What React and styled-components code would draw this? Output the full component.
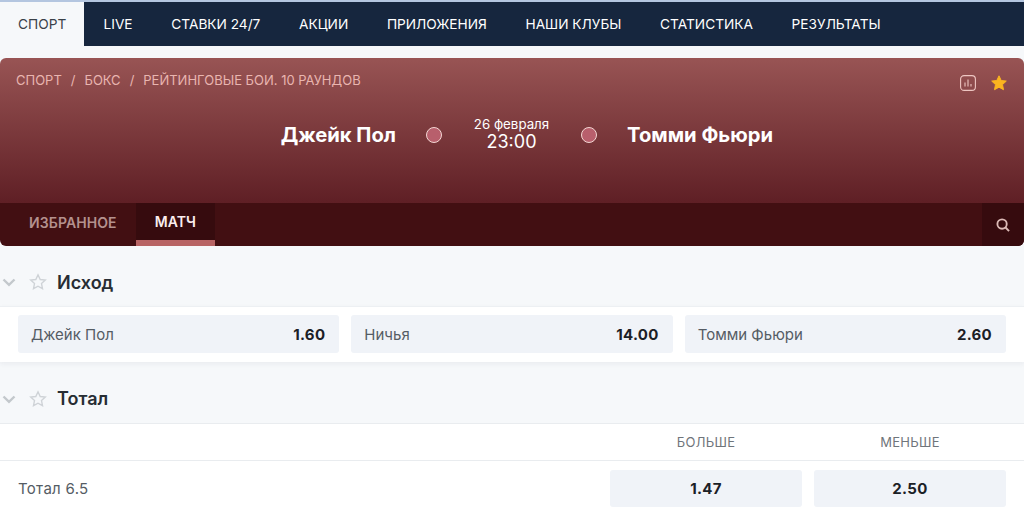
import React from 'react';
import styled, { createGlobalStyle } from 'styled-components';

const GlobalStyle = createGlobalStyle`
  html, body {
    margin: 0;
    padding: 0;
    background: #f6f8fa;
    font-family: Inter, "Noto Sans", sans-serif;
    overflow: hidden;
  }
  * { box-sizing: border-box; }
`;

const Page = styled.div`
  width: 1024px;
  height: 516px;
  overflow: hidden;
  border-top: 2px solid #b4c6e0;
`;

const Nav = styled.nav`
  display: flex;
  height: 44px;
  background: #16263e;
`;

const NavItem = styled.a`
  display: flex;
  align-items: center;
  padding: 0 19.2px 1px 19.5px;
  font-size: 13.7px;
  color: #fff;
  ${(p) => p.$active && `
    width: 84px;
    padding: 0 18px 1px;
    background: #f6f8fa;
    color: #3a4148;
  `}
`;

const Hero = styled.section`
  margin-top: 12px;
  height: 188px;
  display: flex;
  flex-direction: column;
  border-radius: 6px;
  overflow: hidden;
`;

const HeroTop = styled.div`
  flex: 1;
  display: flex;
  flex-direction: column;
  padding: 14px 16px 0;
  background: linear-gradient(180deg, #985454 0%, #5f1f25 100%);
`;

const HeroHead = styled.div`
  display: flex;
  justify-content: space-between;
  align-items: center;
  height: 16px;
`;

const Crumbs = styled.div`
  display: flex;
  gap: 9px;
  font-size: 13px;
  color: #e9b5b0;
`;

const HeroIcons = styled.div`
  display: flex;
  align-items: center;
  gap: 14px;
  margin-top: 5px;
`;

const Teams = styled.div`
  display: flex;
  justify-content: center;
  align-items: center;
  margin-top: 29px;
  padding-right: 1px;
`;

const TeamName = styled.div`
  width: 200px;
  font-size: 20.2px;
  font-weight: 700;
  color: #fff;
  text-align: ${(p) => (p.$right ? 'left' : 'right')};
`;

const Dot = styled.span`
  width: 16px;
  height: 16px;
  margin: 0 ${(p) => (p.$right ? '30px' : '0')} 0 ${(p) => (p.$right ? '0' : '30px')};
  border-radius: 50%;
  background: #b85f6c;
  border: 1.5px solid #f3d6d3;
`;

const MatchTime = styled.div`
  width: 139px;
  text-align: center;
  color: #fff;
`;

const MatchDate = styled.div`
  font-size: 13.3px;
  line-height: 14px;
`;

const MatchHour = styled.div`
  font-size: 18px;
  line-height: 21px;
`;

const TabBar = styled.div`
  display: flex;
  height: 43px;
  padding-left: 10px;
  background: #420f12;
`;

const Tab = styled.div`
  display: flex;
  align-items: center;
  padding: 0 19px 5px;
  font-size: 14px;
  font-weight: 600;
  letter-spacing: 0.1px;
  color: ${(p) => (p.$active ? '#fbeeee' : '#b4918e')};
  ${(p) => p.$active && `
    background: #360b0e;
    border-bottom: 6px solid #b86464;
    padding-bottom: 0;
  `}
`;

const SearchBox = styled.div`
  margin-left: auto;
  width: 42px;
  display: flex;
  align-items: center;
  justify-content: center;
  background: #360b0e;
`;

const MarketHead = styled.div`
  display: flex;
  align-items: center;
  height: ${(p) => p.$h}px;
  padding: 12px 0 0 2px;
  font-size: 18px;
  font-weight: 600;
  color: #272d33;
`;

const FavIcon = styled.svg`
  margin: 0 10px 0 13px;
`;

const OddsRow = styled.div`
  display: grid;
  grid-template-columns: repeat(3, 1fr);
  gap: 12px;
  height: 56px;
  padding: 8px 18px 9px;
  background: #fff;
  border-top: 1px solid #edf0f3;
  box-shadow: 0 2px 5px rgba(30, 40, 60, 0.06);
`;

const Outcome = styled.button`
  display: flex;
  justify-content: space-between;
  align-items: center;
  padding: 0 14px 0 13px;
  border: 0;
  border-radius: 3px;
  background: #f0f3f8;
  font-family: inherit;
  font-size: 15px;
  color: #555c64;
`;

const Coef = styled.span`
  font-size: 15px;
  font-weight: 700;
  letter-spacing: 0.3px;
  color: #1b2026;
`;

const TotalTable = styled.div`
  background: #fff;
  border-top: 1px solid #e9ecef;
`;

const ColumnsRow = styled.div`
  display: grid;
  grid-template-columns: 1fr 192px 192px;
  column-gap: 12px;
  align-items: center;
  height: 37px;
  padding: 0 18px;
  border-bottom: 1px solid #e9ecef;
`;

const ColumnTitle = styled.div`
  font-size: 13px;
  letter-spacing: 0.3px;
  text-align: center;
  color: #6f757b;
`;

const TotalRow = styled.div`
  display: grid;
  grid-template-columns: 1fr 192px 192px;
  column-gap: 12px;
  align-items: center;
  height: 56px;
  padding: 0 18px 2px;
  font-size: 15px;
  letter-spacing: 0.3px;
  color: #555c64;
`;

const CoefButton = styled.button`
  height: 37px;
  border: 0;
  border-radius: 3px;
  background: #f0f3f8;
  font-family: inherit;
  font-size: 15px;
  font-weight: 700;
  letter-spacing: 0.3px;
  color: #1b2026;
`;

const navItems = ['СПОРТ', 'LIVE', 'СТАВКИ 24/7', 'АКЦИИ', 'ПРИЛОЖЕНИЯ', 'НАШИ КЛУБЫ', 'СТАТИСТИКА', 'РЕЗУЛЬТАТЫ'];
const outcomes = [
  ['Джейк Пол', '1.60'],
  ['Ничья', '14.00'],
  ['Томми Фьюри', '2.60'],
];

function MarketTitle({ height, children }) {
  return (
    <MarketHead $h={height}>
      <svg width="14" height="14" viewBox="0 0 14 14" fill="none" stroke="#c3c8cc" strokeWidth="2.4">
        <path d="M1.5 4.5 7 9.8l5.5-5.3" />
      </svg>
      <FavIcon width="18" height="18" viewBox="0 0 18 18" fill="none" stroke="#cfd3d7" strokeWidth="1.4">
        <path d="M9 1.8l2.2 4.7 5.1.6-3.8 3.5 1 5.1L9 13.2l-4.5 2.5 1-5.1-3.8-3.5 5.1-.6z" />
      </FavIcon>
      {children}
    </MarketHead>
  );
}

export default function App() {
  return (
    <Page>
      <GlobalStyle />
      <Nav>
        {navItems.map((item, index) => (
          <NavItem key={item} $active={index === 0}>{item}</NavItem>
        ))}
      </Nav>
      <Hero>
        <HeroTop>
          <HeroHead>
            <Crumbs>
              <span>СПОРТ</span><span>/</span><span>БОКС</span><span>/</span><span>РЕЙТИНГОВЫЕ БОИ. 10 РАУНДОВ</span>
            </Crumbs>
            <HeroIcons>
              <svg width="16" height="16" viewBox="0 0 16 16" fill="none" stroke="#eec6c2" strokeWidth="1.1">
                <rect x="0.6" y="0.6" width="14.8" height="14.8" rx="3.5" />
                <path d="M5 7.5v4M8 4.5v7M11 9v2.5" />
              </svg>
              <svg width="18" height="18" viewBox="0 0 18 18" fill="#fbb41f" stroke="#fbb41f" strokeWidth="1" strokeLinejoin="round">
                <path d="M9 1.8l2.2 4.7 5.1.6-3.8 3.5 1 5.1L9 13.2l-4.5 2.5 1-5.1-3.8-3.5 5.1-.6z" />
              </svg>
            </HeroIcons>
          </HeroHead>
          <Teams>
            <TeamName>Джейк Пол</TeamName>
            <Dot />
            <MatchTime>
              <MatchDate>26 февраля</MatchDate>
              <MatchHour>23:00</MatchHour>
            </MatchTime>
            <Dot $right />
            <TeamName $right>Томми Фьюри</TeamName>
          </Teams>
        </HeroTop>
        <TabBar>
          <Tab>ИЗБРАННОЕ</Tab>
          <Tab $active>МАТЧ</Tab>
          <SearchBox>
            <svg width="14" height="14" viewBox="0 0 15 15" fill="none" stroke="#dcbab6" strokeWidth="2">
              <circle cx="6.5" cy="6.5" r="5" />
              <path d="M10.2 10.2 14 14" />
            </svg>
          </SearchBox>
        </TabBar>
      </Hero>
      <MarketTitle height={60}>Исход</MarketTitle>
      <OddsRow>
        {outcomes.map(([name, coef]) => (
          <Outcome key={name}>
            <span>{name}</span>
            <Coef>{coef}</Coef>
          </Outcome>
        ))}
      </OddsRow>
      <MarketTitle height={61}>Тотал</MarketTitle>
      <TotalTable>
        <ColumnsRow>
          <span />
          <ColumnTitle>БОЛЬШЕ</ColumnTitle>
          <ColumnTitle>МЕНЬШЕ</ColumnTitle>
        </ColumnsRow>
        <TotalRow>
          <span>Тотал 6.5</span>
          <CoefButton>1.47</CoefButton>
          <CoefButton>2.50</CoefButton>
        </TotalRow>
      </TotalTable>
    </Page>
  );
}
